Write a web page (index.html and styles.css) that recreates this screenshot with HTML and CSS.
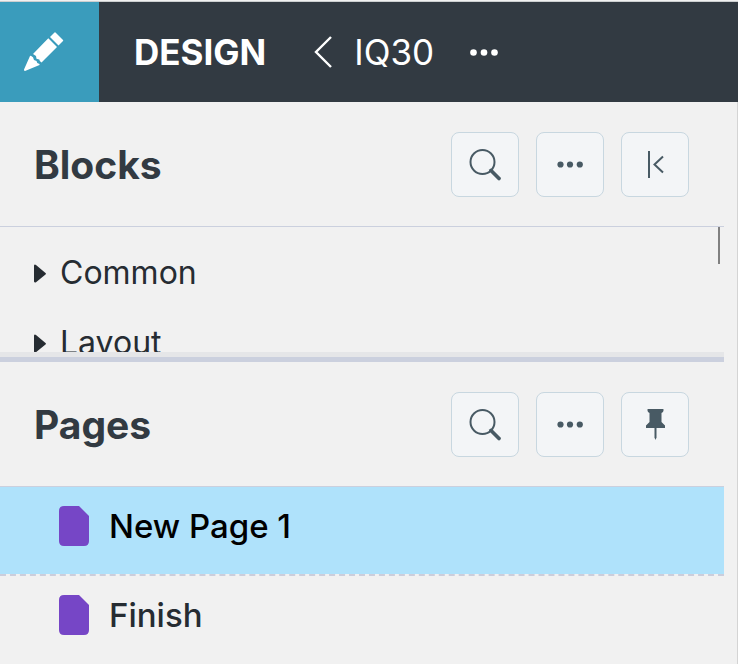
FILE: index.html
```
<!DOCTYPE html>
<html lang="en">
<head>
  <meta charset="UTF-8">
  <meta name="viewport" content="width=device-width, initial-scale=1.0">
  <title>Design - IQ30</title>
  <link rel="stylesheet" href="styles.css">
</head>
<body>

  <header class="topbar">
    <button class="edit-button" aria-label="Edit">
      <svg width="40" height="40" viewBox="0 0 40 40" fill="#fff">
        <path d="M30.5 0.5 Q31 0 31.5 0.5 L39 8 Q39.5 8.5 39 9 L34.5 13.5 L26 5 Z"/>
        <path d="M24.3 6.2 L33 15 L17.5 30.5 L15.8 29 L15.3 27.5 L12.5 26.8 L12 24 L9 22 Z"/>
        <path d="M6.8 23.8 L9 25.2 L10 28 L12.5 29 L13.3 31 L15.5 32 L15.5 33 L1 39 Q0 39 0 37.5 L6 24 Z"/>
      </svg>
    </button>
    <h1 class="mode">DESIGN</h1>
    <a class="back" href="#">
      <svg width="18" height="32" viewBox="0 0 18 32" fill="none" stroke="#fff" stroke-width="2.4">
        <path d="M17 1 L2 16 L17 31"/>
      </svg>
      <span>IQ30</span>
    </a>
    <button class="more" aria-label="More options">
      <svg width="28" height="8" viewBox="0 0 28 8" fill="#fff">
        <circle cx="3.5" cy="4.5" r="3.3"/>
        <circle cx="14" cy="4.5" r="3.3"/>
        <circle cx="24.5" cy="4.5" r="3.3"/>
      </svg>
    </button>
  </header>

  <main class="sidebar">
    <section class="panel">
      <div class="panel-header">
        <h2>Blocks</h2>
        <div class="tools">
          <button class="tool" aria-label="Search blocks">
            <svg width="34" height="34" viewBox="0 0 34 34" fill="none" stroke="#485a64">
              <circle cx="14.5" cy="14" r="12" stroke-width="2"/>
              <path d="M23 22.5 L31 30.5" stroke-width="3.8" stroke-linecap="round"/>
            </svg>
          </button>
          <button class="tool" aria-label="Block options">
            <svg width="34" height="34" viewBox="0 0 34 34" fill="#485a64">
              <circle cx="7.5" cy="16.5" r="3.1"/>
              <circle cx="17" cy="16.5" r="3.1"/>
              <circle cx="26.8" cy="16.5" r="3.1"/>
            </svg>
          </button>
          <button class="tool" aria-label="Collapse">
            <svg width="34" height="34" viewBox="0 0 34 34" fill="none" stroke="#485a64" stroke-width="2">
              <path d="M11 3 V30"/>
              <path d="M25 8.5 L16.5 16.5 L25 24.5"/>
            </svg>
          </button>
        </div>
      </div>
      <div class="block-list">
        <button class="block-group">
          <svg width="12" height="20" viewBox="0 0 12 20" fill="#262c32">
            <path d="M0 2.5 Q0.5 1 2 2 L11.5 10 Q12.5 10.8 11.5 11.5 L2 19.2 Q0.5 20 0 18.5 Z"/>
          </svg>
          <span>Common</span>
        </button>
        <button class="block-group">
          <svg width="12" height="20" viewBox="0 0 12 20" fill="#262c32">
            <path d="M0 2.5 Q0.5 1 2 2 L11.5 10 Q12.5 10.8 11.5 11.5 L2 19.2 Q0.5 20 0 18.5 Z"/>
          </svg>
          <span>Layout</span>
        </button>
        <div class="scroll-thumb"></div>
      </div>
      <div class="splitter"></div>
    </section>

    <section class="panel">
      <div class="panel-header">
        <h2>Pages</h2>
        <div class="tools">
          <button class="tool" aria-label="Search pages">
            <svg width="34" height="34" viewBox="0 0 34 34" fill="none" stroke="#485a64">
              <circle cx="14.5" cy="14" r="12" stroke-width="2"/>
              <path d="M23 22.5 L31 30.5" stroke-width="3.8" stroke-linecap="round"/>
            </svg>
          </button>
          <button class="tool" aria-label="Page options">
            <svg width="34" height="34" viewBox="0 0 34 34" fill="#485a64">
              <circle cx="7.5" cy="16.5" r="3.1"/>
              <circle cx="17" cy="16.5" r="3.1"/>
              <circle cx="26.8" cy="16.5" r="3.1"/>
            </svg>
          </button>
          <button class="tool" aria-label="Pin">
            <svg width="34" height="34" viewBox="0 0 34 34" fill="#485a64">
              <path d="M10 1 H25 Q26 1 25.5 2.5 L25 4 L23.5 5 V14 L27 17.5 V20 H8 V17.5 L11.5 14 V5 L10 4 L9.5 2.5 Q9 1 10 1 Z"/>
              <path d="M16.5 20 H18.5 V29.5 L17.5 32 L16.5 29.5 Z"/>
            </svg>
          </button>
        </div>
      </div>
      <ul class="page-list">
        <li>
          <a class="page selected" href="#">
            <svg width="30" height="40" viewBox="0 0 30 40" fill="#7646c6">
              <path d="M5 0 H20 L30 10 V35 Q30 40 25 40 H5 Q0 40 0 35 V5 Q0 0 5 0 Z"/>
            </svg>
            <span>New Page 1</span>
          </a>
        </li>
        <li>
          <a class="page" href="#">
            <svg width="30" height="40" viewBox="0 0 30 40" fill="#7646c6">
              <path d="M5 0 H20 L30 10 V35 Q30 40 25 40 H5 Q0 40 0 35 V5 Q0 0 5 0 Z"/>
            </svg>
            <span>Finish</span>
          </a>
        </li>
      </ul>
    </section>
  </main>

</body>
</html>
```
FILE: styles.css
```
* {
  margin: 0;
  padding: 0;
  box-sizing: border-box;
}

body {
  font-family: 'Inter', sans-serif;
  background-color: #f1f1f1;
  color: #262c32;
  min-height: 100vh;
  display: flex;
  flex-direction: column;
  padding-top: 1px;
}

button {
  font: inherit;
  color: inherit;
  border: none;
  background: none;
  cursor: pointer;
}

a {
  color: inherit;
  text-decoration: none;
}

svg {
  display: block;
  flex: none;
}

.topbar {
  display: flex;
  align-items: center;
  border-top: 1px solid #cccfd0;
  background-color: #323a42;
  color: #fff;
  font-size: 35px;
  line-height: 100px;
}

.edit-button {
  width: 99px;
  height: 100px;
  padding-left: 24px;
  background-color: #3a9cbc;
}

.mode {
  font-size: 35px;
  font-weight: 700;
  margin-left: 35px;
}

.back {
  display: flex;
  align-items: center;
  gap: 22px;
  margin-left: 48px;
  font-weight: 400;
}

.more {
  margin-left: 36px;
}

.sidebar {
  flex: 1;
  border-right: 1px solid #d4d4d4;
  padding-right: 13px;
}

.panel-header {
  display: flex;
  align-items: center;
  justify-content: space-between;
  padding: 30px 35px 29px 34px;
  border-bottom: 1px solid #cbd0de;
}

.panel-header h2 {
  font-size: 39px;
  line-height: 64px;
  font-weight: 700;
  color: #323a42;
}

.tools {
  display: flex;
  gap: 17px;
}

.tool {
  display: flex;
  align-items: center;
  justify-content: center;
  width: 68px;
  height: 65px;
  border: 1px solid #c8d7e0;
  border-radius: 8px;
  background-color: #f3f5f7;
}

.block-list {
  position: relative;
  height: 125px;
  padding-top: 11px;
  overflow: hidden;
}

.block-group {
  display: flex;
  align-items: center;
  gap: 14px;
  width: 100%;
  padding-left: 34px;
  font-size: 32px;
  line-height: 70px;
}

.scroll-thumb {
  position: absolute;
  top: 0;
  right: 4px;
  width: 2px;
  height: 37px;
  background-color: #808080;
}

.splitter {
  height: 10px;
  border-top: 5px solid #e5e6e8;
  background-color: #cbd0de;
}

.page-list {
  list-style: none;
}

.page {
  display: flex;
  align-items: center;
  gap: 20px;
  padding-left: 59px;
  font-size: 33px;
  line-height: 78px;
  padding-bottom: 9px;
  font-weight: 500;
}

.page-list li + li {
  border-top: 2px dashed #cbcedc;
}

.page.selected {
  background-color: #afe2fb;
  color: #000;
}
```
